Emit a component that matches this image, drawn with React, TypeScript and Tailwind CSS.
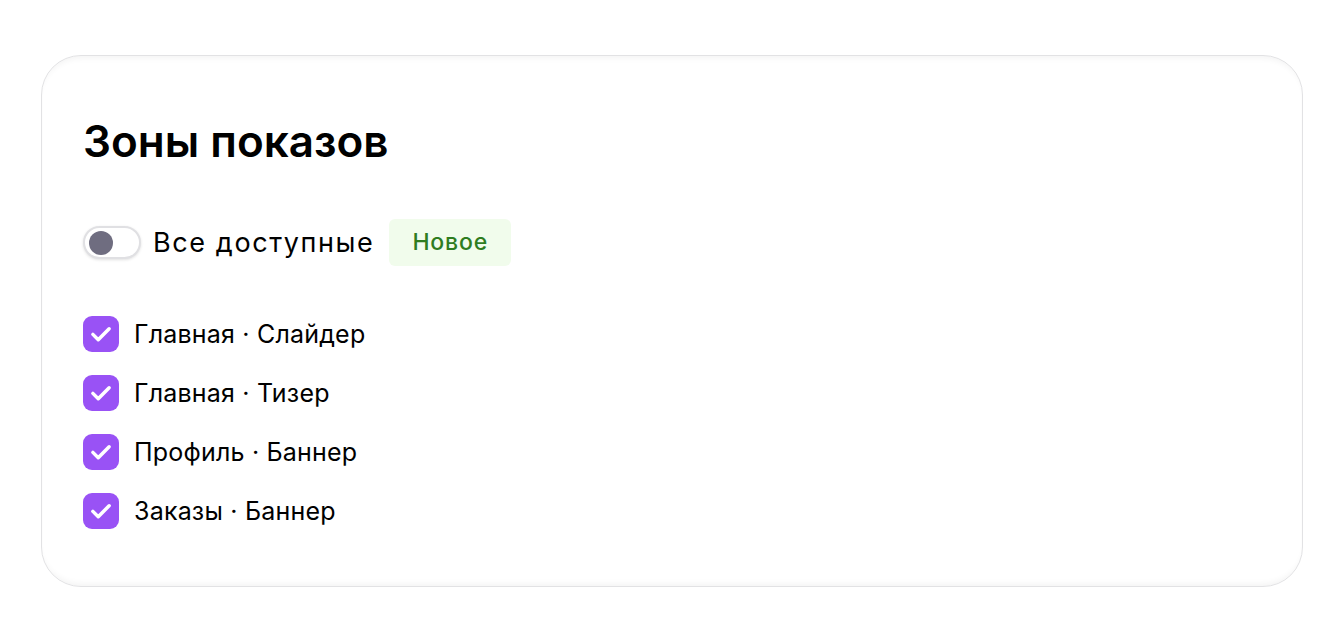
import { useState } from "react";

const zones = [
  "Главная · Слайдер",
  "Главная · Тизер",
  "Профиль · Баннер",
  "Заказы · Баннер",
];

function CheckIcon() {
  return (
    <svg viewBox="0 0 24 24" className="w-[30px] h-[30px]" fill="none">
      <path d="M5.5 12.3l4.3 4.3L18.5 7.8" stroke="white" strokeWidth="2.8" strokeLinecap="round" strokeLinejoin="round" />
    </svg>
  );
}

export default function App() {
  const [all, setAll] = useState(false);
  const [checked, setChecked] = useState<boolean[]>(zones.map(() => true));

  return (
    <div className="min-h-screen bg-white pt-[55px] px-[41px] font-['Inter','Noto_Sans',sans-serif] text-black">
      <div className="rounded-[40px] border border-[#e2e2e4] shadow-[inset_0_-6px_6px_-4px_rgba(0,0,0,0.05),inset_0_6px_6px_-4px_rgba(0,0,0,0.05)] h-[532px] px-[41px] pt-[56px]">
        <h2 className="text-[44px] font-semibold leading-[58px] tracking-[0px]">Зоны показов</h2>

        <div className="flex items-center mt-[49px]">
          <button
            onClick={() => setAll(!all)}
            className="w-[58px] h-[33px] rounded-full border-2 border-[#e0e0e3] bg-white shadow-[0_1px_3px_rgba(0,0,0,0.12)] flex items-center px-[4px]"
            aria-label="toggle"
          >
            <span className="block w-[24px] h-[24px] rounded-full bg-[#6f6d80]" />
          </button>
          <span className="ml-[12px] text-[27px] leading-[34px] tracking-[1.6px]">Все доступные</span>
          <span className="ml-[15px] h-[47px] px-[23px] flex items-center rounded-[6px] bg-[#f1fcec] text-[#2f7d1f] text-[23px] font-medium tracking-[0.8px]">
            Новое
          </span>
        </div>

        <div className="mt-[50px] flex flex-col gap-[23px]">
          {zones.map((z, i) => (
            <label key={z} className="flex items-center cursor-pointer">
              <span
                onClick={() => setChecked(checked.map((c, j) => (j === i ? !c : c)))}
                className={
                  checked[i]
                    ? "w-[36px] h-[36px] rounded-[9px] bg-[#9952f5] flex items-center justify-center"
                    : "w-[36px] h-[36px] rounded-[9px] border-2 border-[#ccc] bg-white"
                }
              >
                {checked[i] && <CheckIcon />}
              </span>
              <span className="ml-[15px] text-[25px] leading-[36px] tracking-[0.2px]">{z}</span>
            </label>
          ))}
        </div>
      </div>
    </div>
  );
}
